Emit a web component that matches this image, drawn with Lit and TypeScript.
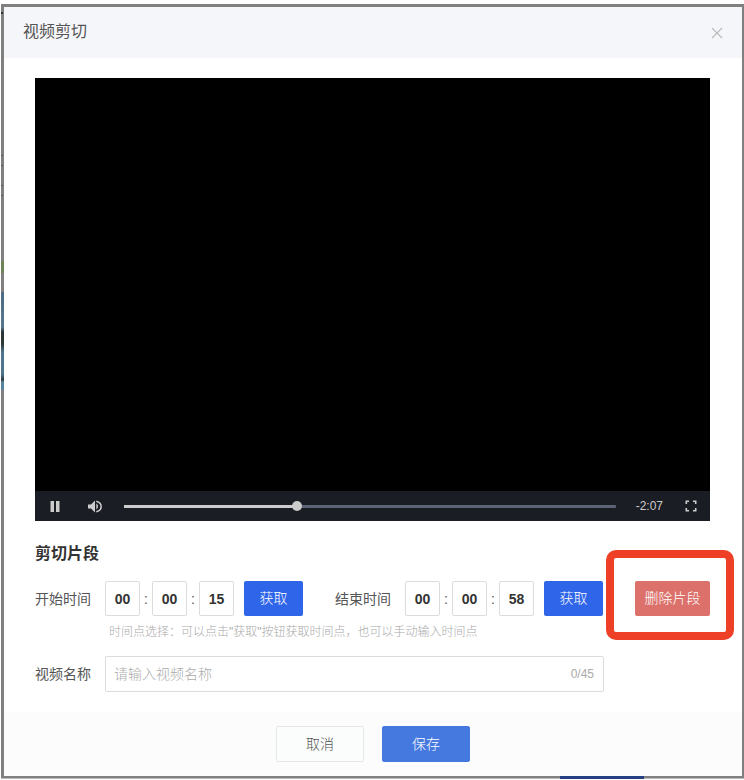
import { LitElement, html, css, svg } from "lit";
import { customElement, property, state } from "lit/decorators.js";

const icons = {
  close: svg`<path d="M1 1 L11 11 M11 1 L1 11" fill="none" stroke="currentColor" stroke-width="1.1"/>`,
  pause: svg`<path d="M.5 0H4V11H.5Z M6 0H9.5V11H6Z" fill="currentColor"/>`,
  volume: svg`<path d="M0 4.5H3L7 .5V12.5L3 8.5H0Z" fill="currentColor"/><path d="M8.3 3.6C10.5 4.6 10.5 8.4 8.3 9.4Z" fill="currentColor"/><path d="M8.3 1.2C14.8 2.8 14.8 10.2 8.3 11.8" fill="none" stroke="currentColor" stroke-width="1.5"/>`,
  full: svg`<path d="M1.3 4V1.3H4 M8 1.3H10.7V4 M10.7 8V10.7H8 M4 10.7H1.3V8" fill="none" stroke="currentColor" stroke-width="1.6"/>`,
};

@customElement("player-view")
export class PlayerView extends LitElement {
  @property({ type: Number }) progress = 34.8;
  @property() remaining = "-2:07";

  static styles = css`
    :host {
      display: flex;
      flex-direction: column;
      aspect-ratio: 675 / 443;
      background: #000;
      font-family: "Liberation Sans", "Noto Sans CJK SC", sans-serif;
    }
    .screen {
      flex: 1;
    }
    .bar {
      display: flex;
      align-items: center;
      gap: 16px;
      height: 30px;
      padding: 0 7px 0 8px;
      background: #1b1d24;
      color: #ccc;
      font-size: 12px;
    }
    button {
      display: flex;
      align-items: center;
      justify-content: center;
      width: 24px;
      height: 30px;
      padding: 0;
      border: 0;
      background: none;
      color: inherit;
    }
    .seek {
      appearance: none;
      flex: 1;
      min-width: 0;
      height: 10px;
      margin: 0 4px 0 1px;
      background: linear-gradient(90deg, #ccc var(--played), #5a6474 var(--played)) center / 100% 3px no-repeat;
    }
    .seek::-webkit-slider-thumb {
      appearance: none;
      width: 10px;
      height: 10px;
      border-radius: 50%;
      background: #ccc;
    }
  `;

  render() {
    return html`
      <div class="screen"></div>
      <div class="bar">
        <button type="button" aria-label="暂停"><svg width="10" height="11" viewBox="0 0 10 11">${icons.pause}</svg></button>
        <button type="button" aria-label="音量"><svg width="15" height="13" viewBox="0 0 15 13">${icons.volume}</svg></button>
        <input class="seek" type="range" min="0" max="100" step="any" aria-label="播放进度"
          .value=${String(this.progress)} style="--played: ${this.progress}%" />
        <span>${this.remaining}</span>
        <button type="button" aria-label="全屏"><svg width="12" height="12" viewBox="0 0 12 12">${icons.full}</svg></button>
      </div>
    `;
  }
}

@customElement("time-point")
export class TimePoint extends LitElement {
  @property() label = "";
  @property({ type: Array }) parts: string[] = [];

  static styles = css`
    :host {
      display: block;
    }
    fieldset {
      display: flex;
      align-items: center;
      margin: 0;
      padding: 0;
      border: 0;
      font: 14px "Liberation Sans", "Noto Sans CJK SC", sans-serif;
      color: #555;
    }
    .label {
      width: 56px;
      margin-right: 14px;
      padding-bottom: 2px;
      white-space: nowrap;
    }
    input {
      box-sizing: border-box;
      width: 35px;
      height: 35px;
      padding: 0;
      border: 1px solid #dcdcdc;
      border-radius: 2px;
      text-align: center;
      font: bold 14px "Liberation Sans", sans-serif;
      color: #333;
    }
    .colon {
      width: 12px;
      text-align: center;
    }
    button {
      width: 59px;
      height: 35px;
      margin-left: 10px;
      padding: 0 0 3px;
      border: 0;
      border-radius: 2px;
      background: #2f66e9;
      color: #fff;
      font: 300 14px "Liberation Sans", "Noto Sans CJK SC", sans-serif;
    }
  `;

  render() {
    const units = ["时", "分", "秒"];
    return html`
      <fieldset aria-label=${this.label}>
        <span class="label">${this.label}</span>
        ${this.parts.map(
          (part, i) => html`${i ? html`<span class="colon">:</span>` : ""}<input type="text" aria-label=${this.label + units[i]} .value=${part} />`
        )}
        <button type="button">获取</button>
      </fieldset>
    `;
  }
}

@customElement("app-root")
export class AppRoot extends LitElement {
  @state() private name = "";

  static styles = css`
    :host {
      display: block;
      padding: 4px 0 1px 1px;
      background: #fff;
      font: 14px "Liberation Sans", "Noto Sans CJK SC", sans-serif;
      color: #555;
    }
    .backdrop {
      padding: 3px 2px 3px 3px;
      background:
        linear-gradient(#263f83, #263f83) 559px 100% / 84px 3px no-repeat,
        linear-gradient(90deg, #bbb, #bbb) 0 100% / 100% 1px no-repeat,
        linear-gradient(#333, #333) 0 8px / 2px 2px no-repeat,
        linear-gradient(#555, #555 1px, #808080 1px, #808080 10px, #555 10px) 0 151px / 2px 11px no-repeat,
        linear-gradient(#555, #555 1px, #808080 1px, #808080 10px, #555 10px) 0 181px / 2px 11px no-repeat,
        linear-gradient(#6f8358, #6f8358) 0 257px / 3px 12px no-repeat,
        linear-gradient(#4d6b84, #56788f 35px, #2c3436 40px, #2f3936 52px, #4d7590 60px, #4d7590 82px, #30383c 88px, #56849c 90px) 0 288px / 3px 98px no-repeat,
        #808080;
    }
    .dialog {
      background: #fff;
    }
    header {
      display: flex;
      align-items: center;
      justify-content: space-between;
      height: 51px;
      padding: 0 19px;
      background: #f5f6fa;
    }
    h1 {
      margin: 0;
      padding-bottom: 1px;
      font-size: 16px;
      line-height: 24px;
      font-weight: 400;
      color: #555;
    }
    .close {
      display: flex;
      padding: 0;
      border: 0;
      background: none;
      color: #bbb;
    }
    .content {
      padding: 20px 32px 20px 31px;
    }
    h2 {
      margin: 21px 0 15px;
      font-size: 16px;
      line-height: 24px;
      font-weight: 700;
      color: #333;
    }
    .times {
      display: flex;
      align-items: center;
      gap: 32px;
    }
    .remove {
      position: relative;
      margin-left: auto;
    }
    .remove button {
      display: block;
      width: 75px;
      height: 35px;
      padding: 0 0 3px;
      border: 0;
      border-radius: 2px;
      background: #dc716b;
      color: #fff;
      font: 300 14px "Liberation Sans", "Noto Sans CJK SC", sans-serif;
    }
    .mark {
      position: absolute;
      inset: -31px -24px -24px -29px;
      border: 8px solid #ee4026;
      border-radius: 10px;
      pointer-events: none;
    }
    .hint {
      margin: 7px 0 15px 74px;
      font-size: 12px;
      line-height: 18px;
      font-weight: 300;
      color: #aaa;
    }
    .name {
      display: flex;
      align-items: center;
      margin-right: 106px;
    }
    .name label {
      width: 56px;
      margin-right: 14px;
      padding-bottom: 2px;
      white-space: nowrap;
    }
    .field {
      display: flex;
      align-items: center;
      flex: 1;
      box-sizing: border-box;
      height: 36px;
      padding: 0 9px 0 8px;
      border: 1px solid #dcdcdc;
      border-radius: 2px;
    }
    .field input {
      flex: 1;
      min-width: 0;
      padding: 0;
      border: 0;
      outline: 0;
      font: inherit;
      color: #333;
    }
    .field input::placeholder {
      font-weight: 300;
      color: #aaa;
    }
    .count {
      font-size: 12px;
      color: #aaa;
    }
    footer {
      display: flex;
      justify-content: center;
      gap: 18px;
      padding: 14px 0;
      background: #fcfcfc;
    }
    footer button {
      box-sizing: border-box;
      width: 88px;
      height: 36px;
      padding: 0 0 3px;
      border: 1px solid #e6e8e8;
      border-radius: 2px;
      background: #fbfdfc;
      color: #555;
      font: 300 14px "Liberation Sans", "Noto Sans CJK SC", sans-serif;
    }
    footer .save {
      border-color: #4679df;
      background: #4679df;
      color: #fff;
    }
  `;

  render() {
    return html`
      <div class="backdrop">
        <section class="dialog" role="dialog" aria-labelledby="title">
          <header>
            <h1 id="title">视频剪切</h1>
            <button class="close" type="button" aria-label="关闭"><svg width="12" height="12" viewBox="0 0 12 12">${icons.close}</svg></button>
          </header>
          <div class="content">
            <player-view></player-view>
            <h2>剪切片段</h2>
            <div class="times">
              <time-point label="开始时间" .parts=${["00", "00", "15"]}></time-point>
              <time-point label="结束时间" .parts=${["00", "00", "58"]}></time-point>
              <div class="remove">
                <button type="button">删除片段</button>
                <span class="mark"></span>
              </div>
            </div>
            <p class="hint">时间点选择：可以点击"获取"按钮获取时间点，也可以手动输入时间点</p>
            <div class="name">
              <label for="name">视频名称</label>
              <div class="field">
                <input id="name" type="text" maxlength="45" placeholder="请输入视频名称" .value=${this.name}
                  @input=${(e: Event) => (this.name = (e.target as HTMLInputElement).value)} />
                <span class="count">${this.name.length}/45</span>
              </div>
            </div>
          </div>
          <footer>
            <button type="button">取消</button>
            <button class="save" type="button">保存</button>
          </footer>
        </section>
      </div>
    `;
  }
}
